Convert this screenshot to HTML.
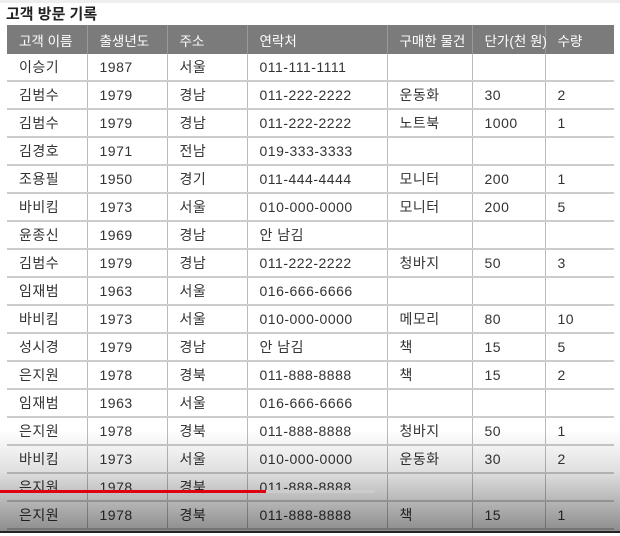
<!DOCTYPE html><html><head><meta charset="utf-8"><style>
body{margin:0;width:620px;height:536px;background:#fff;position:relative;overflow:hidden;font-family:"Liberation Sans","Noto Sans CJK KR",sans-serif}
.t{position:absolute;left:6px;top:3px;font-size:15px;font-weight:bold;color:#222}
table{position:absolute;left:7px;top:25px;width:607px;border-collapse:collapse;table-layout:fixed;font-size:14px;color:#333}
td,th{border-left:1px solid #bbb;border-bottom:2px solid #ccc;padding:0 0 0 12px;height:26px;text-align:left;font-weight:normal;white-space:nowrap}
td{letter-spacing:0.5px}
th{background:#7b7b7b;color:#fff;height:29px;border-left:1px solid #999;border-bottom:none;font-size:13.5px}
tr td:first-child,tr th:first-child{border-left:none}
.ov{position:absolute;left:0;top:430px;width:620px;height:102px;background:linear-gradient(rgba(0,0,0,0),rgba(0,0,0,0.12) 40%,rgba(0,0,0,0.45))}
.bl{position:absolute;left:0;top:531px;width:620px;height:2px;background:#222}
.wb{position:absolute;left:0;top:533px;width:620px;height:3px;background:#fff}
.r{position:absolute;left:0;top:490px;width:266px;height:3px;background:#e00010}
.g{position:absolute;left:266px;top:490px;width:109px;height:3px;background:#ccc}
.top{position:absolute;left:0;top:0;width:620px;height:3px;background:#eee}
</style></head><body>
<div class="top"></div>
<div class="t">고객 방문 기록</div>
<table>
<colgroup><col style="width:80px"><col style="width:80px"><col style="width:80px"><col style="width:140px"><col style="width:85px"><col style="width:73px"><col style="width:69px"></colgroup>
<tr><th>고객 이름</th><th>출생년도</th><th>주소</th><th>연락처</th><th>구매한 물건</th><th>단가(천 원)</th><th>수량</th></tr>
<tr><td>이승기</td><td>1987</td><td>서울</td><td>011-111-1111</td><td></td><td></td><td></td></tr>
<tr><td>김범수</td><td>1979</td><td>경남</td><td>011-222-2222</td><td>운동화</td><td>30</td><td>2</td></tr>
<tr><td>김범수</td><td>1979</td><td>경남</td><td>011-222-2222</td><td>노트북</td><td>1000</td><td>1</td></tr>
<tr><td>김경호</td><td>1971</td><td>전남</td><td>019-333-3333</td><td></td><td></td><td></td></tr>
<tr><td>조용필</td><td>1950</td><td>경기</td><td>011-444-4444</td><td>모니터</td><td>200</td><td>1</td></tr>
<tr><td>바비킴</td><td>1973</td><td>서울</td><td>010-000-0000</td><td>모니터</td><td>200</td><td>5</td></tr>
<tr><td>윤종신</td><td>1969</td><td>경남</td><td>안 남김</td><td></td><td></td><td></td></tr>
<tr><td>김범수</td><td>1979</td><td>경남</td><td>011-222-2222</td><td>청바지</td><td>50</td><td>3</td></tr>
<tr><td>임재범</td><td>1963</td><td>서울</td><td>016-666-6666</td><td></td><td></td><td></td></tr>
<tr><td>바비킴</td><td>1973</td><td>서울</td><td>010-000-0000</td><td>메모리</td><td>80</td><td>10</td></tr>
<tr><td>성시경</td><td>1979</td><td>경남</td><td>안 남김</td><td>책</td><td>15</td><td>5</td></tr>
<tr><td>은지원</td><td>1978</td><td>경북</td><td>011-888-8888</td><td>책</td><td>15</td><td>2</td></tr>
<tr><td>임재범</td><td>1963</td><td>서울</td><td>016-666-6666</td><td></td><td></td><td></td></tr>
<tr><td>은지원</td><td>1978</td><td>경북</td><td>011-888-8888</td><td>청바지</td><td>50</td><td>1</td></tr>
<tr><td>바비킴</td><td>1973</td><td>서울</td><td>010-000-0000</td><td>운동화</td><td>30</td><td>2</td></tr>
<tr><td>은지원</td><td>1978</td><td>경북</td><td>011-888-8888</td><td></td><td></td><td></td></tr>
<tr><td>은지원</td><td>1978</td><td>경북</td><td>011-888-8888</td><td>책</td><td>15</td><td>1</td></tr>
</table>
<div class="ov"></div>
<div class="r"></div><div class="g"></div>
<div class="bl"></div><div class="wb"></div>
</body></html>
